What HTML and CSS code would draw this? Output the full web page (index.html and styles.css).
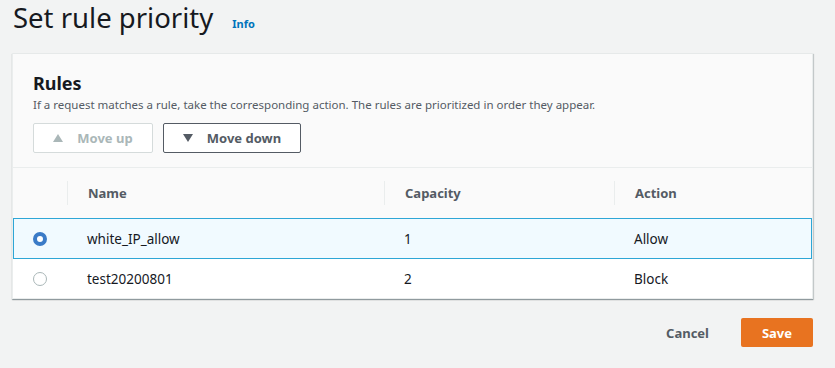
FILE: index.html
```html
<!DOCTYPE html>
<html lang="en">
<head>
    <meta charset="UTF-8">
    <title>Set rule priority</title>
    <link rel="stylesheet" href="styles.css">
</head>
<body>

    <!-- Page title -->
    <div class="page-title">
        <h1>Set rule priority</h1>
        <a class="info-link" href="#">Info</a>
    </div>

    <div class="card">
        <div class="card-header">
            <h2>Rules</h2>
            <p class="description">If a request matches a rule, take the corresponding action. The rules are prioritized in order they appear.</p>
            <div class="actions">
                <button class="btn btn-disabled"><span class="tri tri-up"></span>Move up</button>
                <button class="btn"><span class="tri tri-down"></span>Move down</button>
            </div>
        </div>

        <div class="rules-table">
            <div class="row head">
                <div class="cell"></div>
                <div class="cell sep">Name</div>
                <div class="cell sep">Capacity</div>
                <div class="cell sep">Action</div>
            </div>
            <div class="row selected">
                <div class="cell"><span class="radio checked"></span></div>
                <div class="cell">white_IP_allow</div>
                <div class="cell">1</div>
                <div class="cell">Allow</div>
            </div>
            <div class="row">
                <div class="cell"><span class="radio"></span></div>
                <div class="cell">test20200801</div>
                <div class="cell">2</div>
                <div class="cell">Block</div>
            </div>
        </div>
    </div>

    <div class="footer">
        <button class="btn-link">Cancel</button>
        <button class="btn-primary">Save</button>
    </div>

</body>
</html>
```

FILE: styles.css
```css
body {
    margin: 0;
    background-color: #f2f3f3;
    font-family: "Noto Sans", "Open Sans", sans-serif;
    color: #16191f;
    padding: 0 22px 0 12px;
}

.page-title {
    display: flex;
    align-items: baseline;
    height: 53px;
    padding-left: 1px;
}

.page-title h1 {
    margin: 0;
    font-size: 27.5px;
    font-weight: 400;
    line-height: 36px;
}

.info-link {
    margin-left: 19px;
    font-size: 11px;
    font-weight: 700;
    color: #0073bb;
    text-decoration: none;
}

.card {
    background-color: #fff;
    border: 1px solid #eaeded;
    border-top-color: #e6e9e9;
    box-shadow: 0 1px 1px 0 rgba(0, 28, 36, 0.3), 1px 1px 1px 0 rgba(0, 28, 36, 0.15);
}

.card-header {
    background-color: #fafafa;
    padding: 18px 20px 14px 20px;
    border-bottom: 1px solid #eaeded;
}

.card-header h2 {
    margin: 0;
    font-size: 18px;
    line-height: 22px;
    font-weight: 700;
}

.description {
    margin: 3px 0 10px 0;
    font-size: 11.5px;
    line-height: 16px;
    color: #545b64;
}

.actions {
    display: flex;
    gap: 10px;
}

.btn {
    display: flex;
    align-items: center;
    justify-content: center;
    height: 30px;
    padding: 0;
    background: #fff;
    border: 1px solid #545b64;
    border-radius: 2px;
    font-family: inherit;
    font-size: 13px;
    font-weight: 700;
    color: #545b64;
    white-space: nowrap;
}

.btn-disabled {
    width: 120px;
    border-color: #d5dbdb;
    color: #aab7b8;
}

.btn:not(.btn-disabled) {
    width: 138px;
    color: #545b64;
}

.tri {
    width: 0;
    height: 0;
    margin-right: 14px;
    border-left: 5px solid transparent;
    border-right: 5px solid transparent;
}

.tri-up {
    border-bottom: 8px solid #aab7b8;
}

.tri-down {
    border-top: 8px solid #545b64;
}

/* Tabelle */
.row {
    display: grid;
    grid-template-columns: 54px 317px 230px 1fr;
    height: 40px;
    align-items: center;
    font-size: 13.5px;
    border-bottom: 1px solid #eaeded;
}

.row:last-child {
    border-bottom: none;
    height: 39px;
}

.row.head {
    height: 50px;
    background-color: #fafafa;
    font-size: 13px;
    font-weight: 700;
    color: #545b64;
}

.cell {
    padding-left: 20px;
    height: 100%;
    display: flex;
    align-items: center;
}

.cell.sep {
    background-image: linear-gradient(#eaeded, #eaeded);
    background-size: 1px 24px;
    background-position: left center;
    background-repeat: no-repeat;
    padding-left: 21px;
}

.row:not(.head) .cell:not(:first-child) {
    padding-left: 20px;
}

.row.selected {
    background-color: #f1faff;
    height: 39px;
    border-top: 1px solid #2ea6d6;
    border-bottom-color: #2ea6d6;
    box-shadow: inset 1px 0 0 #2ea6d6, inset -1px 0 0 #2ea6d6;
    margin-top: -1px;
}

.radio {
    width: 14px;
    height: 14px;
    border-radius: 50%;
    box-sizing: border-box;
    border: 1px solid #aab7b8;
    background: #fff;
}

.radio.checked {
    border: 4px solid #3b7bc7;
}

.footer {
    display: flex;
    justify-content: flex-end;
    align-items: center;
    gap: 32px;
    margin-top: 19px;
}

.btn-link {
    background: none;
    border: none;
    font-family: inherit;
    font-size: 13px;
    font-weight: 700;
    color: #545b64;
    padding: 0;
}

.btn-primary {
    width: 72px;
    height: 29px;
    background-color: #e87320;
    border: none;
    border-radius: 2px;
    font-family: inherit;
    font-size: 13px;
    font-weight: 700;
    color: #fff;
}
```
